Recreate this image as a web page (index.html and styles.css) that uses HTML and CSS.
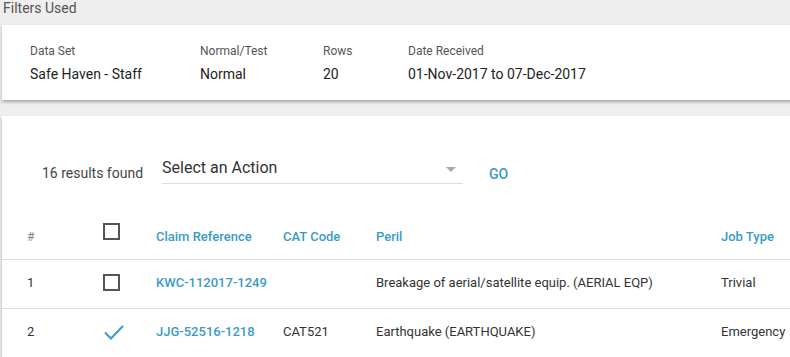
FILE: index.html
```html
<!DOCTYPE html>
<html lang="en">
<head>
    <meta charset="UTF-8">
    <meta name="viewport" content="width=device-width, initial-scale=1.0">
    <title>Claims Search</title>
    <link rel="stylesheet" href="styles.css">
</head>
<body>
    <div class="page">
        <h2 class="section-title">Filters Used</h2>

        <div class="card filters">
            <div class="filter">
                <span class="filter-label">Data Set</span>
                <span class="filter-value">Safe Haven - Staff</span>
            </div>
            <div class="filter">
                <span class="filter-label">Normal/Test</span>
                <span class="filter-value">Normal</span>
            </div>
            <div class="filter">
                <span class="filter-label">Rows</span>
                <span class="filter-value">20</span>
            </div>
            <div class="filter">
                <span class="filter-label">Date Received</span>
                <span class="filter-value">01-Nov-2017 to 07-Dec-2017</span>
            </div>
        </div>

        <div class="card results">
            <div class="actions">
                <span class="count">16 results found</span>
                <div class="select">
                    <span>Select an Action</span>
                    <span class="caret"></span>
                </div>
                <button class="go">GO</button>
            </div>

            <div class="table">
                <div class="row head">
                    <span class="num">#</span>
                    <span><span class="checkbox"></span></span>
                    <span>Claim Reference</span>
                    <span>CAT Code</span>
                    <span>Peril</span>
                    <span>Job Type</span>
                </div>
                <div class="row">
                    <span>1</span>
                    <span><span class="checkbox"></span></span>
                    <a class="ref" href="#">KWC-112017-1249</a>
                    <span></span>
                    <span>Breakage of aerial/satellite equip. (AERIAL EQP)</span>
                    <span>Trivial</span>
                </div>
                <div class="row">
                    <span>2</span>
                    <span>
                        <svg class="tick" width="20" height="16" viewBox="0 0 20 16">
                            <path d="M1 8.5 L7 14.5 L19 2" fill="none" stroke="#3a9bc6" stroke-width="2"/>
                        </svg>
                    </span>
                    <a class="ref" href="#">JJG-52516-1218</a>
                    <span>CAT521</span>
                    <span>Earthquake (EARTHQUAKE)</span>
                    <span>Emergency</span>
                </div>
            </div>
        </div>
    </div>
</body>
</html>
```

FILE: styles.css
```css
body {
    margin: 0;
    background-color: #eeeeee;
    font-family: Roboto, "Liberation Sans", sans-serif;
    color: #333;
    overflow: hidden;
}

.page {
    padding: 0 0 0 2px;
    margin-right: -20px;
}

.section-title {
    margin: 0;
    padding: 0 0 0 1px;
    height: 25px;
    line-height: 17px;
    font-size: 14px;
    font-weight: 400;
    color: #555;
}

.card {
    background-color: #fff;
    box-shadow: 0 2px 3px rgba(0, 0, 0, 0.3);
}

.filters {
    display: grid;
    grid-template-columns: 170px 123px 85px auto;
    padding: 18px 28px 0;
    height: 57px;
    margin-bottom: 16px;
}

.filter {
    display: flex;
    flex-direction: column;
}

.filter-label {
    font-size: 12px;
    line-height: 16px;
    color: #555;
    margin-bottom: 5px;
}

.filter-value {
    font-size: 14px;
    line-height: 20px;
    color: #222;
}

.results {
    padding-top: 38px;
    height: 260px;
}

.actions {
    display: flex;
    align-items: flex-end;
    padding-left: 40px;
}

.count {
    font-size: 14px;
    line-height: 20px;
    color: #444;
    padding-bottom: 1px;
    margin-right: 19px;
}

.select {
    position: relative;
    width: 301px;
    height: 30px;
    border-bottom: 1px solid #ddd;
    font-size: 16px;
    line-height: 28px;
    color: #333;
    box-sizing: border-box;
}

.caret {
    position: absolute;
    right: 7px;
    top: 13px;
    border-left: 5px solid transparent;
    border-right: 5px solid transparent;
    border-top: 5px solid #aaa;
}

.go {
    border: none;
    background: none;
    padding: 0;
    margin-left: 26px;
    font-family: inherit;
    font-size: 14px;
    font-weight: 500;
    color: #3a9bc6;
    line-height: 20px;
}

.table {
    margin-top: 35px;
}

.row {
    display: grid;
    grid-template-columns: 76px 53px 127px 93px 345px auto;
    align-items: center;
    padding-left: 25px;
    padding-bottom: 3px;
    height: 49px;
    box-sizing: border-box;
    border-bottom: 1px solid #ddd;
    font-size: 13px;
    line-height: 20px;
}

.row > span,
.row > a {
    display: flex;
    align-items: center;
}

.head {
    align-items: flex-end;
    padding-bottom: 0;
    height: 41px;
}

.head > span {
    padding-bottom: 12px;
    color: #3a9bc6;
    font-weight: 500;
}

.head > .num {
    color: #888;
    font-weight: 400;
    font-size: 12px;
}

.head .checkbox {
    margin-bottom: 7px;
}

.checkbox {
    display: inline-block;
    width: 17px;
    height: 17px;
    border: 2px solid #555;
    box-sizing: border-box;
}

.ref {
    color: #3a9bc6;
    font-weight: 500;
    text-decoration: none;
}

.tick {
    margin-left: 1px;
}
```
